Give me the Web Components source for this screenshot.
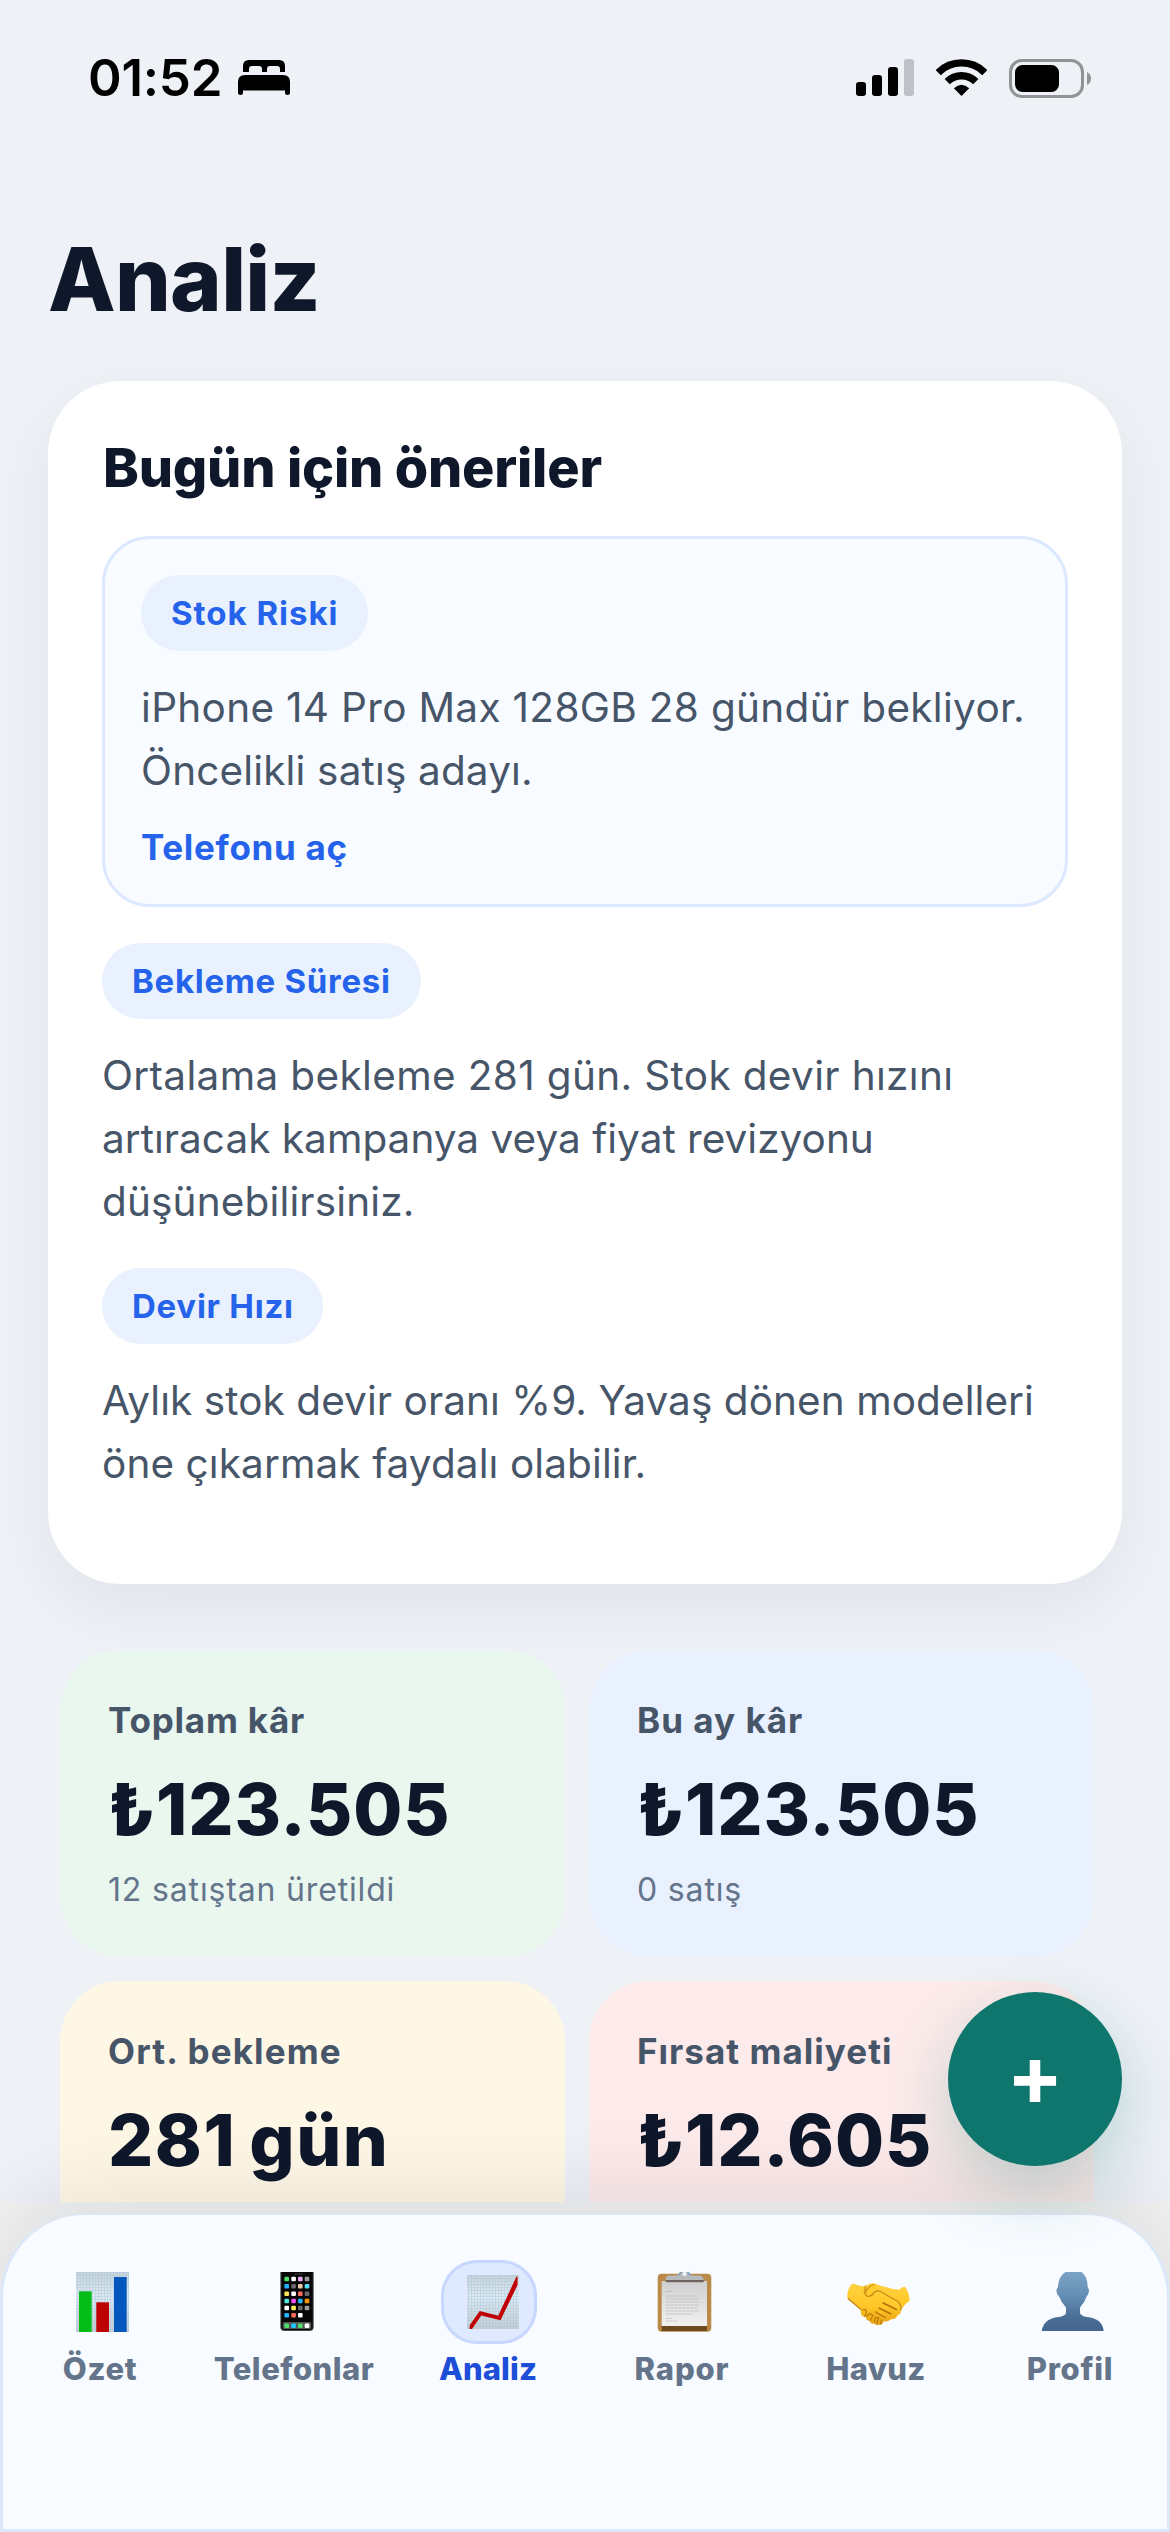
<!DOCTYPE html>
<html lang="tr">
<head>
<meta charset="utf-8">
<title>Analiz</title>
<style>
  html, body { margin: 0; padding: 0; }
  body { width: 1170px; height: 2532px; overflow: hidden; background: #eef1f6; font-family: Inter, "Liberation Sans", sans-serif; color: #0f172a; }
</style>
</head>
<body>
<analytics-screen></analytics-screen>

<template id="t-screen">
  <style>
    :host { display: flex; flex-direction: column; position: relative; width: 1170px; height: 2532px; overflow: hidden; background: #eef1f6; }
    main { height: 2046px; overflow: hidden; box-sizing: border-box; padding: 70px 48px 0; }
    h1 { margin: 0 0 49px; font-size: 88px; line-height: 106px; font-weight: 800; letter-spacing: -.75px; }
    .stats { display: grid; grid-template-columns: 505px 505px; grid-auto-rows: 307px; gap: 24px; margin: 66px 0 0 12px; }
    round-action { position: absolute; right: 48px; top: 1992px; z-index: 2; }
  </style>
  <status-bar></status-bar>
  <main>
    <h1>Analiz</h1>
    <advice-card heading="Bugün için öneriler">
      <advice-item boxed>
        <tag-pill slot="tag" style="--w:227px;--ls:.97px">Stok Riski</tag-pill>
        <text-line style="--ls:.32px">iPhone 14 Pro Max 128GB 28 gündür bekliyor.</text-line>
        <text-line style="--ls:.16px">Öncelikli satış adayı.</text-line>
        <span slot="link">Telefonu aç</span>
      </advice-item>
      <advice-item>
        <tag-pill slot="tag" style="--w:319px;--ls:.71px">Bekleme Süresi</tag-pill>
        <text-line style="--ls:.35px">Ortalama bekleme 281 gün. Stok devir hızını</text-line>
        <text-line style="--ls:.03px">artıracak kampanya veya fiyat revizyonu</text-line>
        <text-line style="--ls:.15px">düşünebilirsiniz.</text-line>
      </advice-item>
      <advice-item last>
        <tag-pill slot="tag" style="--w:221px;--ls:.74px">Devir Hızı</tag-pill>
        <text-line style="--ls:.07px">Aylık stok devir oranı %9. Yavaş dönen modelleri</text-line>
        <text-line style="--ls:.1px">öne çıkarmak faydalı olabilir.</text-line>
      </advice-item>
    </advice-card>
    <div class="stats">
      <stat-card style="--bg:#eaf7ef;--ls:.8px"><span slot="label">Toplam kâr</span>₺123.505<span slot="note">12 satıştan üretildi</span></stat-card>
      <stat-card style="--bg:#e9f1ff;--ls:1.01px"><span slot="label">Bu ay kâr</span>₺123.505<span slot="note">0 satış</span></stat-card>
      <stat-card style="--bg:#fff7e6;--ls:1.16px;--vls:1.5px"><span slot="label">Ort. bekleme</span>281 gün</stat-card>
      <stat-card style="--bg:#fdebeb;--ls:1.03px"><span slot="label">Fırsat maliyeti</span>₺12.605</stat-card>
    </div>
  </main>
  <tab-bar></tab-bar>
  <round-action>+</round-action>
</template>

<template id="t-status">
  <style>
    :host { display: flex; align-items: center; height: 156px; flex: none; box-sizing: border-box; padding: 0 79px 0 88px; color: #000; }
    .time { width: 150px; font-size: 51px; font-weight: 600; line-height: 60px; letter-spacing: -.2px; }
    .right { margin-left: auto; display: flex; align-items: center; gap: 22px; }
    svg { display: block; }
  </style>
  <span class="time">01:52</span>
  <svg width="52" height="36" viewBox="0 0 52 36"><path d="M5 12V6q0-6 6-6h30q6 0 6 6v6h-5V9q0-3-3-3h-7q-3 0-3 3v3h-5V9q0-3-3-3h-7q-3 0-3 3v3zM0 22q0-7 7-7h38q7 0 7 7v11q0 2-2.500 2T47 33v-2.500H5V33q0 2-2.500 2T0 33z"/></svg>
  <div class="right">
    <svg width="58" height="38" viewBox="0 0 58 38"><rect y="23" width="10" height="14" rx="3"/><rect x="16" y="16" width="10" height="21" rx="3"/><rect x="32" y="8" width="10" height="29" rx="3"/><rect x="48" width="10" height="37" rx="3" fill="#bec1c6"/></svg>
    <svg width="51" height="38" viewBox="0 0 51 38"><g fill="none" stroke="#000" stroke-width="7.300"><path d="M2.200 13.600A33 33 0 0 1 48.800 13.600"/><path d="M11.200 22.700A20.200 20.200 0 0 1 39.800 22.700"/></g><path d="M25.500 37l-7.700-7.700q7.700-7.200 15.400 0z"/></svg>
    <svg width="82" height="39" viewBox="0 0 82 39"><rect x="1.500" y="1.500" width="72" height="36" rx="11.500" fill="none" stroke="#919397" stroke-width="3"/><rect x="6" y="6" width="44" height="27" rx="7.500"/><path d="M78 13q4 2 4 6.500T78 26z" fill="#919397"/></svg>
  </div>
</template>

<template id="t-advice-card">
  <style>
    :host { display: flex; flex-direction: column; gap: 36px; box-sizing: border-box; height: 1203px; padding: 55px 54px 0; border-radius: 72px; background: #fff; box-shadow: 0 24px 72px rgba(15,23,42,.06); }
    h2 { margin: 0; font-size: 54px; line-height: 64px; font-weight: 800; letter-spacing: -.2px; padding-left: 1px; }
  </style>
  <h2></h2>
  <slot></slot>
</template>

<template id="t-advice-item">
  <style>
    :host { display: block; color: #475569; }
    :host([boxed]) { border: 3px solid #dbe8ff; border-radius: 48px; background: #f8fbff; padding: 36px; }
    :host([last]) { margin-top: -1px; }
    .copy { margin-top: 25px; font-size: 40.5px; line-height: 63px; font-weight: 400; }
    ::slotted([slot="link"]) { display: block; margin-top: 24px; font-size: 35px; line-height: 42px; font-weight: 700; letter-spacing: .69px; color: #2563eb; }
  </style>
  <slot name="tag"></slot>
  <div class="copy"><slot></slot></div>
  <slot name="link"></slot>
</template>

<template id="t-pill">
  <style>
    :host { display: flex; align-items: center; box-sizing: border-box; width: var(--w); height: 76px; padding-left: 30px; border-radius: 38px; background: #e9f1ff; color: #2563eb; font-size: 33px; line-height: 40px; font-weight: 700; letter-spacing: var(--ls); white-space: nowrap; }
  </style>
  <slot></slot>
</template>

<template id="t-line">
  <style>:host { display: block; white-space: nowrap; letter-spacing: var(--ls); }</style>
  <slot></slot>
</template>

<template id="t-stat">
  <style>
    :host { display: flex; flex-direction: column; box-sizing: border-box; padding: 49px 48px 0; border-radius: 60px; background: var(--bg); white-space: nowrap; }
    .label { height: 42px; font-size: 35px; line-height: 42px; font-weight: 700; letter-spacing: var(--ls); color: #475569; }
    .value { height: 84px; margin-top: 26px; font-size: 71px; line-height: 84px; font-weight: 800; letter-spacing: var(--vls, .85px); word-spacing: -4px; }
    .note { margin-top: 18px; font-size: 32px; line-height: 42px; font-weight: 400; letter-spacing: .84px; color: #64748b; }
  </style>
  <div class="label"><slot name="label"></slot></div>
  <div class="value"><slot></slot></div>
  <div class="note"><slot name="note"></slot></div>
</template>

<template id="t-action">
  <style>
    :host { display: flex; align-items: center; justify-content: center; box-sizing: border-box; width: 174px; height: 174px; padding-bottom: 9px; border-radius: 50%; background: #0f766e; color: #fff; font-size: 84px; line-height: 100px; font-weight: 700; box-shadow: 0 24px 64px rgba(15,118,110,.25); }
  </style>
  <slot></slot>
</template>

<template id="t-tab-bar">
  <style>
    :host { display: block; height: 330px; flex: none; box-sizing: border-box; padding-top: 12px; background: #f2f2f2; }
    nav { position: relative; box-sizing: border-box; height: 318px; display: grid; grid-template-columns: repeat(6, 194px); align-items: start; padding-top: 45px; border: 3px solid #dbe8fa; border-top-width: 1px; border-radius: 84px 84px 0 0; background: #f8fbff; box-shadow: 0 -24px 84px rgba(15,23,42,.09); }
    svg { display: block; }
  </style>
  <nav>
    <tab-item style="--ls:.7px"><svg slot="icon" width="96" height="84" viewBox="0 0 96 84">
      <defs>
        <linearGradient id="pg" x1="0" y1="0" x2="0" y2="1"><stop offset="0" stop-color="#cbd3da"/><stop offset=".4" stop-color="#dfeaf2"/><stop offset="1" stop-color="#c6ccd2"/></linearGradient>
        <pattern id="gr" width="3" height="3" patternUnits="userSpaceOnUse"><path d="M0 .5H3M.5 0V3" stroke="#9ec3dc" stroke-width=".8" opacity=".5"/></pattern>
      </defs>
      <rect x="23" y="12" width="53" height="60" fill="url(#pg)"/><rect x="23" y="12" width="53" height="60" fill="url(#gr)"/>
      <rect x="26" y="31.300" width="12.700" height="40.700" fill="#05bd18"/><rect x="43.300" y="42.300" width="12.700" height="29.700" fill="#bd0303"/><rect x="61" y="17" width="12.700" height="55" fill="#0457bd"/>
    </svg>Özet</tab-item>
    <tab-item style="--ls:.49px"><svg slot="icon" width="96" height="84" viewBox="0 0 96 84">
      <path d="M33.300 12h33.400v55q0 4-4 4h-25.400q-4 0-4-4z" fill="#4a4a4c"/><path d="M34.300 12h31.400v54.500q0 3.500-3.500 3.500h-24.400q-3.500 0-3.500-3.500z" fill="#060607"/><rect x="47" y="13" width="9" height="2" rx="1" fill="#252525"/>
      <rect x="35.800" y="62" width="28.400" height="7" rx="1.500" fill="#555"/>
      <g id="apps"></g>
    </svg>Telefonlar</tab-item>
    <tab-item active style="--ls:.13px"><svg slot="icon" width="96" height="84" viewBox="0 0 96 84">
      <rect x="26" y="15" width="52" height="54" fill="url(#pg)"/><rect x="26" y="15" width="52" height="54" fill="url(#gr)"/>
      <path d="M28.700 69v-3.800L38.700 51l18.500 4.700L75.500 16.500h1V25L59.500 60.300 40.300 55.500 31 69z" fill="#c00206"/>
    </svg>Analiz</tab-item>
    <tab-item style="--ls:.86px"><svg slot="icon" width="96" height="84" viewBox="0 0 96 84">
      <defs><linearGradient id="pp" x1="0" y1="0" x2="0" y2="1"><stop offset="0" stop-color="#cfcfcf"/><stop offset="1" stop-color="#f1f1f1"/></linearGradient></defs>
      <rect x="22.700" y="13.700" width="53.600" height="58" rx="4" fill="#b98a48"/><rect x="26.700" y="66" width="45.300" height="5" fill="#6f4a1e"/>
      <rect x="26.700" y="21" width="45.300" height="45" fill="url(#pp)"/>
      <path d="M31 31.500h7M31 36h31M31 39h33M31 42h34M31 45h33M31 48h32M31 51h34M31 54h26M31 58.500h6M31 61h11" stroke="#a9a9a9" stroke-width="1.200" stroke-dasharray="3.500 .6" opacity=".5"/>
      <rect x="30.700" y="19" width="38" height="3.200" fill="#6e6361"/><path d="M30.700 20q0-4.500 4-4.500h6q3 0 4-3.500h9q1 3.500 4 3.500h6q5 0 5 4.500z" fill="#b7babd"/><path d="M43 15q2-.5 3-3M56 15q-2-.5-3-3" stroke="#7da0bd" stroke-width="1.600" fill="none"/><circle cx="49.500" cy="14" r="2" fill="#f5f8fb"/>
    </svg>Rapor</tab-item>
    <tab-item style="--ls:.34px"><svg slot="icon" width="96" height="84" viewBox="0 0 96 84">
      <defs><linearGradient id="hs" x1="0" y1="0" x2="0" y2="1"><stop offset="0" stop-color="#ffd23f"/><stop offset=".55" stop-color="#ffc727"/><stop offset="1" stop-color="#e79f12"/></linearGradient></defs>
      <path d="M18.300 38Q18 29 22.700 24.300Q25 22.800 27.500 24.700Q32 27 37 25.700Q41 22.500 46 23.500Q52 26.500 58 27.200Q65 30 70.500 29.500Q73 26.500 76 26.700Q80.500 33 80.500 40Q80 42.500 77 43.500L71.800 50Q72.500 54 68.500 55.300Q67 59.500 62 59.200Q58.500 62.500 54.500 61.300Q53.500 65.500 50 64.700Q47.500 66 45.500 63.500Q41.500 64.500 40.800 60.800Q36.500 61 36.800 56.800Q31.500 57.300 31.800 51.500L31.500 49Z" fill="url(#hs)"/>
      <path d="M45 24.500Q39 26 36.500 32.500Q36.500 37 40 36.300Q44 35.500 45 32.500Q47.500 30 51 31.200L69 41.500Q73 46 71.800 50" fill="#ffcb2e" stroke="#c98c14" stroke-width="1.200" stroke-linecap="round"/>
      <path d="M54 43l13.500 6.500M50 48l12 6M46.500 52l9.500 5.500" stroke="#b0720a" stroke-width="1.400" fill="none" stroke-linecap="round"/>
      <path d="M33 50l3.500-.5 1 3.500-2 3.500M38 56l3-2.500 3 2-3 5M45.500 62l1-4.500h3l-1.500 6M51.500 64l1-4" stroke="#b97a0c" stroke-width="1.200" fill="none" stroke-linecap="round"/>
      <path d="M37 25.700Q35 31 36 34" stroke="#cf8f12" stroke-width="2" fill="none" opacity=".7"/><path d="M19 38.500l13 11" stroke="#c98810" stroke-width="1.500"/>
    </svg>Havuz</tab-item>
    <tab-item style="--ls:.72px"><svg slot="icon" width="96" height="84" viewBox="0 0 96 84">
      <defs><linearGradient id="pr" x1="0" y1="0" x2="0" y2="1"><stop offset="0" stop-color="#7ba3c5"/><stop offset=".4" stop-color="#668fb5"/><stop offset=".75" stop-color="#4a6f96"/><stop offset="1" stop-color="#446590"/></linearGradient></defs>
      <path d="M42.500 12H58.500Q64.500 16 64.800 27.500Q66.500 29 65.700 32.500Q65 35.500 63.800 36Q61.500 43 57 47.500V53Q58 56 64 57Q79.500 58.500 80.700 71H18.700Q20.500 58.500 35.500 57Q42 56 43 53V47.500Q38.500 43 35.800 36Q34.500 35.500 33.700 32.500Q33 29 34.800 27.500Q35.500 16 42.500 12Z" fill="url(#pr)"/>
    </svg>Profil</tab-item>
  </nav>
</template>

<template id="t-tab">
  <style>
    :host { display: flex; flex-direction: column; align-items: center; gap: 7px; color: #64748b; font-size: 31px; line-height: 36px; font-weight: 800; letter-spacing: var(--ls); white-space: nowrap; }
    .icon { display: flex; align-items: center; justify-content: center; box-sizing: border-box; width: 96px; height: 84px; margin-left: 2px; border-radius: 36px; }
    :host([active]) { color: #1d4ed8; }
    :host([active]) .icon { background: #dfe9ff; box-shadow: inset 0 0 0 3px #c7d7fe; }
  </style>
  <div class="icon"><slot name="icon"></slot></div>
  <div><slot></slot></div>
</template>

<script>
  const fromTemplate = (id, setup) => class extends HTMLElement {
    constructor() {
      super();
      this.attachShadow({ mode: 'open' }).append(document.getElementById(id).content.cloneNode(true));
    }
    connectedCallback() { if (setup) setup(this); }
  };

  // Home-screen dots on the phone icon: four columns, six rows and a dock.
  const APP_ROWS = [
    [19, ['#4fe06a', '#fff', '#efa8f5', '#9a9a9a']],
    [26.3, ['#1fb6ff', '#6b6b6b', '#e8cba5', '#55dff5']],
    [33.7, ['#fde65a', '#fff', '#ff6a5e', '#6b6b6b']],
    [41, ['#55e6e0', '#ee55ee', '#1fb6ff', '#ff9500']],
    [48, ['#fff', '#fdf05a', '#6b6b6b', '#9a9a9a']],
    [55.3, ['#1fb6ff', '#ff6a5e', '#fff']],
    [65.7, ['#4fe06a', '#1fc8ff', '#4fe06a', '#fff']]
  ];
  const APP_X = [39.7, 46.6, 53.3, 60];

  customElements.define('text-line', fromTemplate('t-line'));
  customElements.define('tag-pill', fromTemplate('t-pill'));
  customElements.define('advice-item', fromTemplate('t-advice-item'));
  customElements.define('advice-card', fromTemplate('t-advice-card', el => {
    el.shadowRoot.querySelector('h2').textContent = el.getAttribute('heading');
  }));
  customElements.define('stat-card', fromTemplate('t-stat'));
  customElements.define('round-action', fromTemplate('t-action'));
  customElements.define('tab-item', fromTemplate('t-tab'));
  customElements.define('tab-bar', fromTemplate('t-tab-bar', el => {
    el.shadowRoot.getElementById('apps').innerHTML = APP_ROWS.map(([y, row]) =>
      row.map((c, i) => `<rect x="${APP_X[i] - 2.3}" y="${y - 2.3}" width="4.600" height="4.600" rx="1" fill="${c}"/>`).join('')).join('');
  }));
  customElements.define('status-bar', fromTemplate('t-status'));
  customElements.define('analytics-screen', fromTemplate('t-screen'));
</script>
</body>
</html>
